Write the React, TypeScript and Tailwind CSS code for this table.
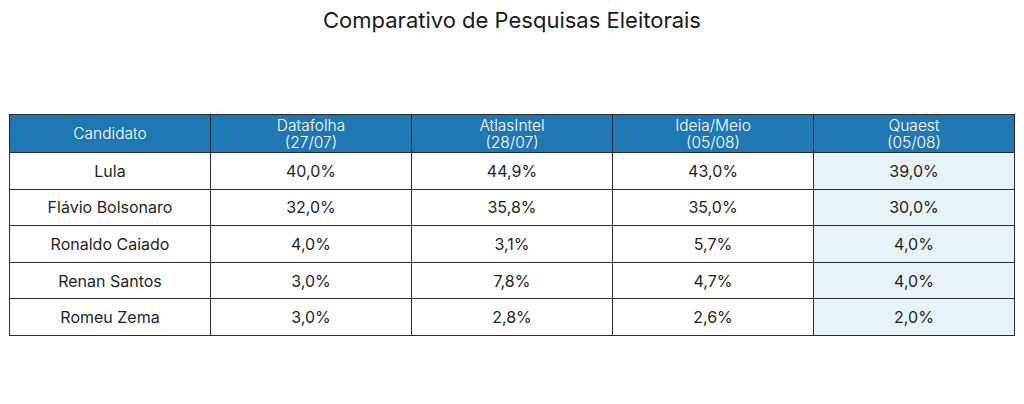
import React from "react";

const headers = [
  { name: "Candidato" },
  { name: "Datafolha", date: "(27/07)" },
  { name: "AtlasIntel", date: "(28/07)" },
  { name: "Ideia/Meio", date: "(05/08)" },
  { name: "Quaest", date: "(05/08)" },
];

const rows = [
  ["Lula", "40,0%", "44,9%", "43,0%", "39,0%"],
  ["Flávio Bolsonaro", "32,0%", "35,8%", "35,0%", "30,0%"],
  ["Ronaldo Caiado", "4,0%", "3,1%", "5,7%", "4,0%"],
  ["Renan Santos", "3,0%", "7,8%", "4,7%", "4,0%"],
  ["Romeu Zema", "3,0%", "2,8%", "2,6%", "2,0%"],
];

export default function App() {
  return (
    <div
      className="w-[1024px] h-[404px] bg-white px-[9px] pt-[8px]"
      style={{ fontFamily: "Inter, 'Liberation Sans', sans-serif" }}
    >
      <h1 className="text-center text-[22px] leading-[24px] text-[#1a1a1a]">
        Comparativo de Pesquisas Eleitorais
      </h1>

      <table className="mt-[82px] w-full table-fixed border-collapse text-[16px] text-[#1f1f1f]">
        <thead>
          <tr className="h-[38px] bg-[#1f77b4] text-white">
            {headers.map((h) => (
              <th
                key={h.name}
                className="border-[1.5px] border-[#2b2b2b] text-center text-[15.5px] font-light leading-[17px] align-middle"
              >
                <div>{h.name}</div>
                {h.date && <div>{h.date}</div>}
              </th>
            ))}
          </tr>
        </thead>
        <tbody>
          {rows.map((r) => (
            <tr key={r[0]} className="h-[36.6px]">
              {r.map((c, i) => (
                <td
                  key={i}
                  className={`border-[1.5px] border-[#2b2b2b] text-center align-middle ${
                    i === 4 ? "bg-[#e8f3f8]" : "bg-white"
                  }`}
                >
                  {c}
                </td>
              ))}
            </tr>
          ))}
        </tbody>
      </table>
    </div>
  );
}
